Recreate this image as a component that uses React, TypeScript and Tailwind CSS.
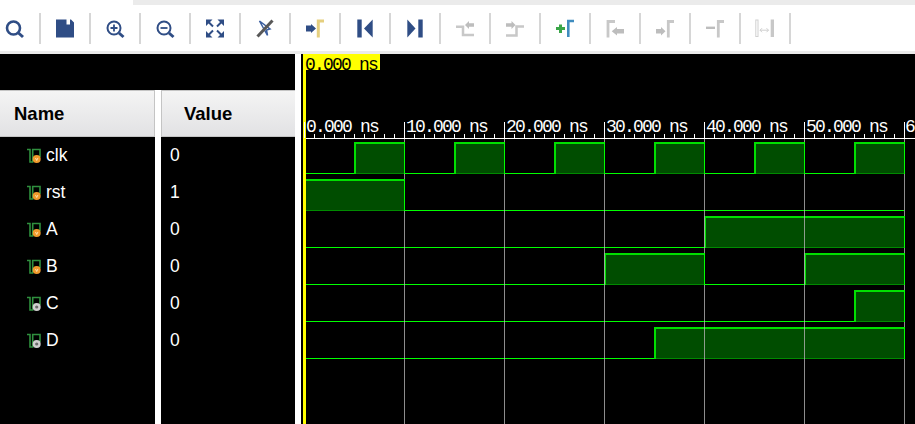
import React from "react";

const NAVY = "#2f4d85";
const GREY = "#bdbdbd";
const LIGHT = "#c8c8c8";

const Icon = ({ children }: { children: React.ReactNode }) => (
  <svg width="24" height="24" viewBox="0 0 24 24" fill="none">
    {children}
  </svg>
);

const toolbarIcons: React.ReactNode[] = [
  // search
  <>
    <circle cx="10.500" cy="12" r="6.500" stroke={NAVY} strokeWidth="2.600" />
    <path d="M15.500 17l4.500 4" stroke={NAVY} strokeWidth="3" />
  </>,
  // save
  <path d="M3 3.500H13.500V8.500H17V3.500H18L21 6.500V21.500H3Z" fill={NAVY} />,
  // zoom in
  <>
    <circle cx="11" cy="12" r="6.500" stroke={NAVY} strokeWidth="2" />
    <path d="M11 8.500v7M7.500 12h7" stroke={NAVY} strokeWidth="1.800" />
    <path d="M16 17l4.500 4" stroke={NAVY} strokeWidth="3" />
  </>,
  // zoom out
  <>
    <circle cx="11" cy="12" r="6.500" stroke={NAVY} strokeWidth="2" />
    <path d="M7.500 12h7" stroke={NAVY} strokeWidth="1.800" />
    <path d="M16 17l4.500 4" stroke={NAVY} strokeWidth="3" />
  </>,
  // zoom fit
  <>
    <path d="M3 3.500h6.500L3 10zM21 3.500h-6.500L21 10zM3 21.500h6.500L3 15zM21 21.500h-6.500L21 15z" fill={NAVY} />
    <path d="M5 5.500l5 5M19 5.500l-5 5M5 19.500l5-5M19 19.500l-5-5" stroke={NAVY} strokeWidth="2" />
  </>,
  // cursor disabled
  <>
    <path d="M6.500 5L17 13L13.500 14L14.500 19.500Z" fill="#fff" stroke="#3b5fa0" strokeWidth="1.500" />
    <path d="M4.500 20.500L19.500 4.500" stroke="#585858" strokeWidth="3" />
  </>,
  // go to time zero
  <>
    <path d="M3 9.500h5V8l5 4.500L8 17v-1.500H3z" fill={NAVY} />
    <path d="M15.300 21.500V5H21" stroke="#e5cf7f" strokeWidth="3" />
  </>,
  // previous
  <>
    <rect x="4.300" y="3.500" width="4.400" height="18" fill={NAVY} />
    <path d="M19.700 3.500v18L11 12.500z" fill={NAVY} />
  </>,
  // next
  <>
    <path d="M4.300 3.500v18L12.500 12.500z" fill={NAVY} />
    <rect x="15.300" y="3.500" width="4.400" height="18" fill={NAVY} />
  </>,
  // previous transition
  <>
    <path d="M3 10.700H10V19H21" stroke={LIGHT} strokeWidth="2.500" />
    <path d="M12 9L16 5V7.200H21V10.800H16V13Z" fill={GREY} />
  </>,
  // next transition
  <>
    <path d="M3 19.500H13.500V10.500H21" stroke={LIGHT} strokeWidth="2.500" />
    <path d="M3 7.200H8.500V5L12.500 9L8.500 13V10.800H3Z" fill={GREY} />
  </>,
  // add marker
  <>
    <path d="M3 12.500H12M7.500 8.500V17" stroke="#3aa648" strokeWidth="3" />
    <path d="M15.300 21V5H21" stroke="#3f8cbf" strokeWidth="2.600" />
  </>,
  // previous marker
  <>
    <path d="M5 21.500V5.500H12" stroke={LIGHT} strokeWidth="2.800" />
    <path d="M21 13H14V11L8.700 15.200L14 19.500V17.500H21Z" fill={GREY} />
  </>,
  // next marker
  <>
    <path d="M3 13H8V11L12.500 15.200L8 19.500V17.500H3Z" fill={GREY} />
    <path d="M15.300 21.500V5.500H21" stroke={LIGHT} strokeWidth="2.800" />
  </>,
  // delete marker
  <>
    <path d="M3 11.800H12" stroke={GREY} strokeWidth="2.400" />
    <path d="M15.300 21.500V5.500H21" stroke={LIGHT} strokeWidth="2.800" />
  </>,
  // swap cursors
  <>
    <rect x="2.800" y="4" width="2.200" height="16.500" stroke="#d0d0d0" strokeWidth="1" />
    <rect x="17.700" y="3.500" width="3.300" height="17.500" fill={LIGHT} />
    <path d="M7 14.200H15.500M9 12.200L7 14.200L9 16.200M13.500 12.200L15.500 14.200L13.500 16.200" stroke="#cfcfcf" strokeWidth="1" />
  </>,
];

const signals: { name: string; value: string; scalar: "orange" | "gray"; highs: [number, number][] }[] = [
  { name: "clk", value: "0", scalar: "orange", highs: [[5, 10], [15, 20], [25, 30], [35, 40], [45, 50], [55, 60]] },
  { name: "rst", value: "1", scalar: "orange", highs: [[0, 10]] },
  { name: "A", value: "0", scalar: "orange", highs: [[40, 60]] },
  { name: "B", value: "0", scalar: "orange", highs: [[30, 40], [50, 60]] },
  { name: "C", value: "0", scalar: "gray", highs: [[55, 60]] },
  { name: "D", value: "0", scalar: "gray", highs: [[35, 60]] },
];

const SignalIcon = ({ kind }: { kind: "orange" | "gray" }) => (
  <svg width="14" height="16" viewBox="0 0 14 16" fill="none" className="shrink-0">
    <path d="M0 1.500H3V14H5.700V1.500H13V9" stroke="#2f8f3e" strokeWidth="1.600" />
    {kind === "orange" ? (
      <>
        <circle cx="9.700" cy="11" r="4" fill="#f09a2c" />
        <path d="M8.500 10l1.200 2.500 1.200-2.500" stroke="#fff0c8" strokeWidth="0.800" />
      </>
    ) : (
      <>
        <circle cx="9.700" cy="11" r="4" fill="#cfcfcf" />
        <circle cx="9.700" cy="11" r="1.600" fill="#6a6a6a" />
      </>
    )}
  </svg>
);

// x position of a time in ns
const tx = (t: number) => 304 + t * 10;

const Waveform = () => (
  <svg width="612" height="370" viewBox="303 54 612 370" className="block shrink-0" shapeRendering="crispEdges">
    <rect x="303" y="54" width="3" height="370" fill="#ffff00" />
    <rect x="303" y="54" width="77" height="16" fill="#ffff00" />
    <text x="305" y="70" fontFamily="'Liberation Mono', monospace" fontSize="18" letterSpacing="-1.800" fill="#000">
      0.000 ns
    </text>

    {/* ruler */}
    <rect x="306" y="138" width="609" height="1" fill="#fff" />
    {Array.from({ length: 61 }).map((_, i) => (
      <rect key={i} x={304 + i * 10} y={i % 10 === 0 ? 122 : 134} width="1" height={i % 10 === 0 ? 16 : 4} fill="#fff" />
    ))}
    {[0, 10, 20, 30, 40, 50].map((t) => (
      <text key={t} x={tx(t) + 2} y="132" fontFamily="'Liberation Mono', monospace" fontSize="18" letterSpacing="-1.800" fill="#fff">
        {t === 0 ? "0" : t}.000 ns
      </text>
    ))}
    <text x="905" y="132" fontFamily="'Liberation Mono', monospace" fontSize="18" fill="#fff">
      6
    </text>

    {signals.map((s, row) => {
      const top = 142 + row * 37;
      const low = top + 31;
      return (
        <g key={s.name}>
          <rect x="306" y={low} width="598" height="1" fill="#00ff00" />
          {s.highs.map(([a, b]) => {
            const left = Math.max(tx(a), 306);
            return (
              <g key={a}>
                <rect x={left} y={top} width={tx(b) - left} height="31" fill="#004d00" />
                <rect x={left} y={low} width={tx(b) - left} height="1" fill="#008a00" />
                <rect x={left} y={top} width={tx(b) - left} height="2" fill="#00e000" />
                {a > 0 && <rect x={tx(a)} y={top} width="2" height="32" fill="#00e000" />}
              </g>
            );
          })}
        </g>
      );
    })}

    {/* time grid */}
    {[10, 20, 30, 40, 50, 60].map((t) => (
      <rect key={t} x={tx(t)} y="139" width="1" height="285" fill="#b0b0b0" opacity="0.8" />
    ))}
    {/* falling edges sit on top of the grid */}
    {signals.map((s, row) =>
      s.highs.map(([a, b]) => (
        <rect key={s.name + a} x={tx(b)} y={142 + row * 37} width="1" height="32" fill="#00ff00" />
      ))
    )}
  </svg>
);

export default function App() {
  return (
    <div className="w-[915px] h-[424px] overflow-hidden flex flex-col bg-white font-['Liberation_Sans',Arial,sans-serif]">
      <div className="h-[5px] ml-[133px] bg-[#ebebeb] shrink-0" />
      <div className="h-[46px] flex items-center -ml-[9px] shrink-0">
        {toolbarIcons.map((icon, i) => (
          <div key={i} className="w-[50px] h-[31px] border-r-2 border-[#d6d6d6] flex items-center justify-center shrink-0">
            <Icon>{icon}</Icon>
          </div>
        ))}
      </div>
      <div className="h-[3px] bg-[#ebebeb] shrink-0" />

      <div className="flex flex-1 min-h-0">
        <div className="w-[295px] bg-black pt-9 flex shrink-0">
          <div className="w-[155px]">
            <div className="h-[47px] border-y border-r border-[#c4c4c4] bg-gradient-to-b from-[#f4f4f4] to-[#e2e2e4] flex items-center pl-[14px] text-[18.5px] font-bold text-black">
              Name
            </div>
            {signals.map((s) => (
              <div key={s.name} className="h-[37px] flex items-center pl-[27px] gap-[5px] text-[17.5px] text-white">
                <SignalIcon kind={s.scalar} />
                <span>{s.name}</span>
              </div>
            ))}
          </div>
          <div className="w-[6px] bg-white" />
          <div className="flex-1">
            <div className="h-[47px] border-y border-l border-[#c4c4c4] bg-gradient-to-b from-[#f4f4f4] to-[#e2e2e4] flex items-center pl-[22px] text-[18.5px] font-bold text-black">
              Value
            </div>
            {signals.map((s) => (
              <div key={s.name} className="h-[37px] flex items-center pl-[9px] text-[17.5px] text-white">
                {s.value}
              </div>
            ))}
          </div>
        </div>
        <div className="w-[6px] bg-white shrink-0" />
        <div className="w-[2px] bg-black shrink-0" />
        <div className="flex-1 bg-black min-w-0">
          <Waveform />
        </div>
      </div>
    </div>
  );
}
